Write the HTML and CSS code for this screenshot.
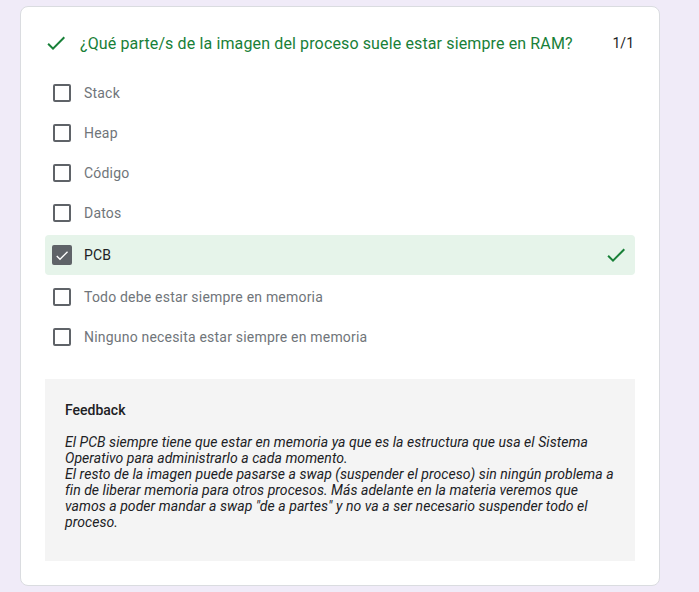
FILE: index.html
```html
<!DOCTYPE html>
<html lang="es">
<head>
<meta charset="utf-8">
<link rel="stylesheet" href="styles.css">
</head>
<body>
<div class="card">
  <div class="q-header">
    <svg class="icon green" viewBox="0 0 24 24" width="24" height="24"><path d="M9 16.17L4.83 12l-1.42 1.41L9 19 21 7l-1.41-1.41z" fill="currentColor"/></svg>
    <div class="q-title">¿Qué parte/s de la imagen del proceso suele estar siempre en RAM?</div>
    <div class="q-score">1/1</div>
  </div>
  <div class="options">
    <div class="opt"><span class="box"></span><span class="label">Stack</span></div>
    <div class="opt"><span class="box"></span><span class="label">Heap</span></div>
    <div class="opt"><span class="box"></span><span class="label">Código</span></div>
    <div class="opt"><span class="box"></span><span class="label">Datos</span></div>
    <div class="opt correct">
      <span class="box checked"><svg viewBox="0 0 24 24" width="18" height="18"><path d="M9 16.17L4.83 12l-1.42 1.41L9 19 21 7l-1.41-1.41z" fill="#fff"/></svg></span>
      <span class="label">PCB</span>
      <svg class="icon green right" viewBox="0 0 24 24" width="24" height="24"><path d="M9 16.17L4.83 12l-1.42 1.41L9 19 21 7l-1.41-1.41z" fill="currentColor"/></svg>
    </div>
    <div class="opt"><span class="box"></span><span class="label">Todo debe estar siempre en memoria</span></div>
    <div class="opt"><span class="box"></span><span class="label">Ninguno necesita estar siempre en memoria</span></div>
  </div>
  <div class="feedback">
    <div class="fb-title">Feedback</div>
    <div class="fb-text">El PCB siempre tiene que estar en memoria ya que es la estructura que usa el Sistema Operativo para administrarlo a cada momento.<br>El resto de la imagen puede pasarse a swap (suspender el proceso) sin ningún problema a fin de liberar memoria para otros procesos. Más adelante en la materia veremos que vamos a poder mandar a swap "de a partes" y no va a ser necesario suspender todo el proceso.</div>
  </div>
</div>
</body>
</html>
```

FILE: styles.css
```css
html, body {
  margin: 0;
  padding: 0;
}
body {
  background: #f0ebf8;
  font-family: Roboto, "Liberation Sans", Arial, sans-serif;
  color: #202124;
  padding: 6px 0 0 20px;
  height: 592px;
  box-sizing: border-box;
}
.card {
  width: 640px;
  box-sizing: border-box;
  background: #fff;
  border: 1px solid #dadce0;
  border-radius: 8px;
  padding: 24px 24px 24px 24px;
}
.q-header {
  display: flex;
  align-items: center;
  height: 24px;
}
.icon {
  display: block;
  flex: none;
}
.green {
  color: #188038;
}
.q-header .icon {
  margin-left: -1px;
}
.q-title {
  margin-left: 12px;
  font-size: 16px;
  color: #188038;
  flex: 1;
  letter-spacing: 0.13px;
}
.q-score {
  font-size: 14px;
  color: #202124;
  margin-right: 1px;
}
.options {
  margin-top: 18px;
  margin-bottom: 22px;
}
.opt {
  display: flex;
  align-items: center;
  height: 40px;
  padding-left: 8px;
  font-size: 14px;
  color: #70757a;
  letter-spacing: 0.2px;
}
.opt.correct {
  background: #e6f4ea;
  border-radius: 4px;
  margin: 2px 0;
  color: #202124;
  padding-right: 7px;
}
.box {
  width: 18px;
  height: 18px;
  box-sizing: border-box;
  border: 2px solid #5f6368;
  border-radius: 2px;
  flex: none;
  margin-right: 13px;
  display: flex;
  align-items: center;
  justify-content: center;
}
.box.checked {
  background: #5f6368;
  width: 20px;
  height: 20px;
  margin-right: 12px;
  margin-left: -1px;
}
.box.checked svg {
  display: block;
  width: 17px;
  height: 17px;
}
.label {
  flex: 1;
}
.feedback {
  background: #f4f4f4;
  padding: 21px 20px 31px 20px;
}
.fb-title {
  font-size: 14px;
  font-weight: 500;
  line-height: 20px;
  color: #202124;
}
.fb-text {
  margin-top: 14px;
  font-size: 14px;
  font-style: italic;
  line-height: 16px;
  letter-spacing: 0.05px;
  color: #202124;
}
```
